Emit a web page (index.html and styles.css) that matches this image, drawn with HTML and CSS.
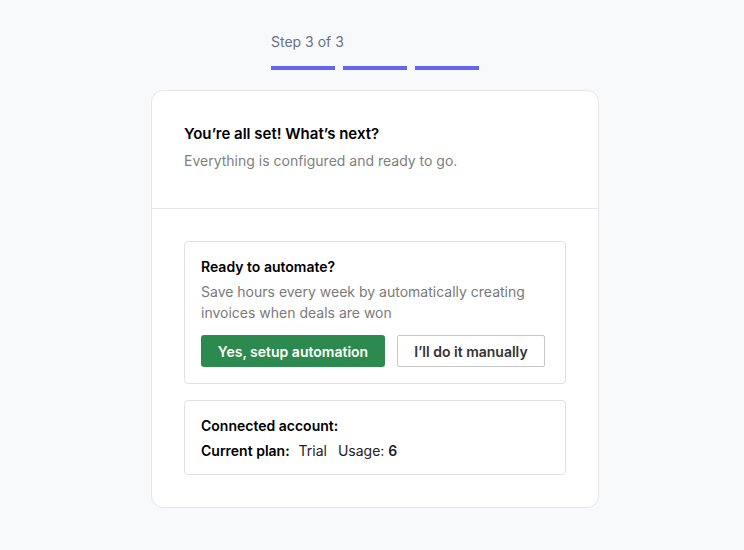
FILE: index.html
```html
<!DOCTYPE html>
<html lang="en">

<head>
    <meta charset="UTF-8">
    <meta name="viewport" content="width=device-width, initial-scale=1.0">
    <title>Setup complete</title>
    <link rel="stylesheet" href="styles.css">
</head>

<body>
    <div class="page">
        <div class="steps">
            <div class="steps-label">Step 3 of 3</div>
            <div class="steps-bars">
                <span class="bar"></span>
                <span class="bar"></span>
                <span class="bar"></span>
            </div>
        </div>

        <div class="card">
            <div class="card-header">
                <h1>You’re all set! What’s next?</h1>
                <p>Everything is configured and ready to go.</p>
            </div>

            <div class="card-body">
                <div class="panel">
                    <h2>Ready to automate?</h2>
                    <p>Save hours every week by automatically creating invoices when deals are won</p>
                    <div class="actions">
                        <button class="btn btn-primary">Yes, setup automation</button>
                        <button class="btn btn-outline">I’ll do it manually</button>
                    </div>
                </div>

                <!-- account info -->
                <div class="panel panel-info">
                    <div class="info-row"><strong>Connected account:</strong></div>
                    <div class="info-row">
                        <strong>Current plan:</strong>
                        <span class="value">Trial</span>
                        <span class="value usage">Usage: <strong>6</strong></span>
                    </div>
                </div>
            </div>
        </div>
    </div>
</body>

</html>
```

FILE: styles.css
```css
body {
    margin: 0;
    padding: 0;
    background: #f8f9fb;
    font-family: Inter, "Noto Sans", sans-serif;
    color: #111;
}

.page {
    padding: 32px 0 0 6px;
    display: flex;
    flex-direction: column;
    align-items: center;
}

.steps {
    width: 208px;
    margin-bottom: 20px;
}

.steps-label {
    font-size: 14px;
    line-height: 20px;
    color: #6b7280;
    margin-bottom: 14px;
}

.steps-bars {
    display: flex;
    gap: 8px;
}

.steps-bars .bar {
    width: 64px;
    height: 4px;
    background: #6366f1;
}

.card {
    width: 446px;
    background: #fff;
    border: 1px solid #e5e7eb;
    border-radius: 12px;
}

.card-header {
    padding: 32px 32px 37px;
    border-bottom: 1px solid #e5e7eb;
}

.card-header h1 {
    margin: 0 0 6px;
    font-size: 15px;
    line-height: 22px;
    font-weight: 600;
    color: #000;
}

.card-header p {
    margin: 0;
    font-size: 14px;
    line-height: 20px;
    color: #808080;
}

.card-body {
    padding: 32px 32px 32px;
    display: flex;
    flex-direction: column;
    gap: 16px;
}

.panel {
    border: 1px solid #e2e2e2;
    border-radius: 4px;
    padding: 15px 16px 16px;
}

.panel h2 {
    margin: 0 0 4px;
    font-size: 14px;
    line-height: 20px;
    font-weight: 600;
    color: #000;
}

.panel p {
    margin: 0 0 12px;
    font-size: 14px;
    line-height: 21px;
    color: #7a7a7a;
}

.actions {
    display: flex;
    gap: 12px;
}

.btn {
    font-family: inherit;
    font-size: 14px;
    font-weight: 600;
    height: 32px;
    cursor: pointer;
}

.btn-primary {
    width: 184px;
    background: #2d8a4e;
    color: #fff;
    border: none;
    border-radius: 3px;
}

.btn-outline {
    width: 148px;
    background: #fff;
    color: #333;
    border: 1px solid #c8c8c8;
    border-radius: 2px;
}

.panel-info {
    padding-bottom: 13px;
}

.info-row {
    font-size: 14px;
    line-height: 20px;
    color: #000;
}

.info-row + .info-row {
    margin-top: 5px;
}

.info-row strong {
    font-weight: 600;
}

.info-row .value {
    margin-left: 5px;
    color: #222;
}

.info-row .usage {
    margin-left: 7px;
}
```
